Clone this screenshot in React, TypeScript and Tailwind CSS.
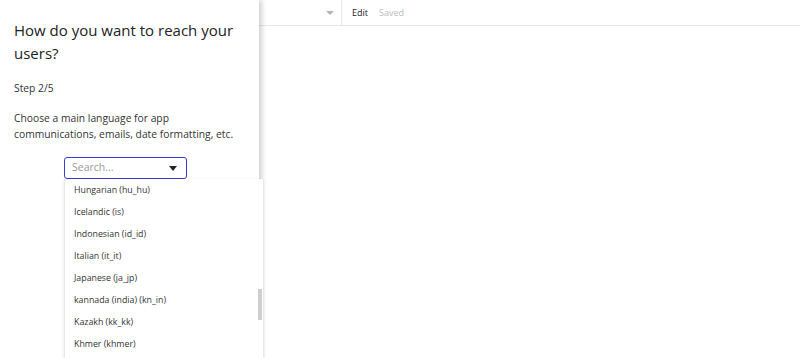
import React from "react";

const items = [
  "Hungarian (hu_hu)",
  "Icelandic (is)",
  "Indonesian (id_id)",
  "Italian (it_it)",
  "Japanese (ja_jp)",
  "kannada (india) (kn_in)",
  "Kazakh (kk_kk)",
  "Khmer (khmer)",
];

export default function App() {
  return (
    <div
      className="flex h-[358px] w-[800px] overflow-hidden bg-white text-[#333]"
      style={{ fontFamily: '"Open Sans", sans-serif' }}
    >
      <div className="relative z-10 flex w-[259px] shrink-0 flex-col bg-white pl-[14px] pr-[8px] pt-[19px] shadow-[3px_0_5px_rgba(0,0,0,0.18)]">
        <h1 className="text-[15px] leading-[23px] text-[#222]">How do you want to reach your users?</h1>
        <div className="mt-[15px] text-[10.3px] leading-[16px]">Step 2/5</div>
        <div className="mt-[14px] text-[10.3px] leading-[16px]">
          Choose a main language for app communications, emails, date formatting, etc.
        </div>
        <div className="relative mt-[15px] ml-[50px]">
          <div className="flex h-[22px] w-[123px] items-center justify-between rounded-[3px] border border-[#3a3ad6] px-[7px]">
            <span className="text-[10.5px] text-[#999]">Search...</span>
            <svg width="8" height="5" viewBox="0 0 8 5" className="mr-[2px]">
              <path d="M0 0 L8 0 L4 5 Z" fill="#222" />
            </svg>
          </div>
          <div className="absolute left-0 top-[22px] h-[200px] w-[199px] overflow-hidden border-l border-[#e6e6e6] bg-white shadow-[0_1px_3px_rgba(0,0,0,0.12)]">
            <div className="relative flex flex-col pt-[1px]">
              {items.map((it) => (
                <div key={it} className="flex h-[22px] items-center pl-[9px] text-[8.8px] text-[#333]">
                  {it}
                </div>
              ))}
              <div className="absolute right-[1px] top-[110px] h-[31px] w-[4px] bg-[#cfcfcf]" />
            </div>
          </div>
        </div>
      </div>
      <div className="flex flex-1 flex-col">
        <div className="flex h-[26px] items-stretch border-b border-[#e6e6e6]">
          <div className="flex w-[82px] items-center justify-end pr-[7px]">
            <svg width="8" height="4" viewBox="0 0 8 4">
              <path d="M0 0 L8 0 L4 4 Z" fill="#b5b5b5" />
            </svg>
          </div>
          <div className="w-px bg-[#e6e6e6]" />
          <div className="flex items-center gap-[11px] pl-[10px] text-[9px]">
            <span className="text-[#222]">Edit</span>
            <span className="text-[#bbb]">Saved</span>
          </div>
        </div>
      </div>
    </div>
  );
}
